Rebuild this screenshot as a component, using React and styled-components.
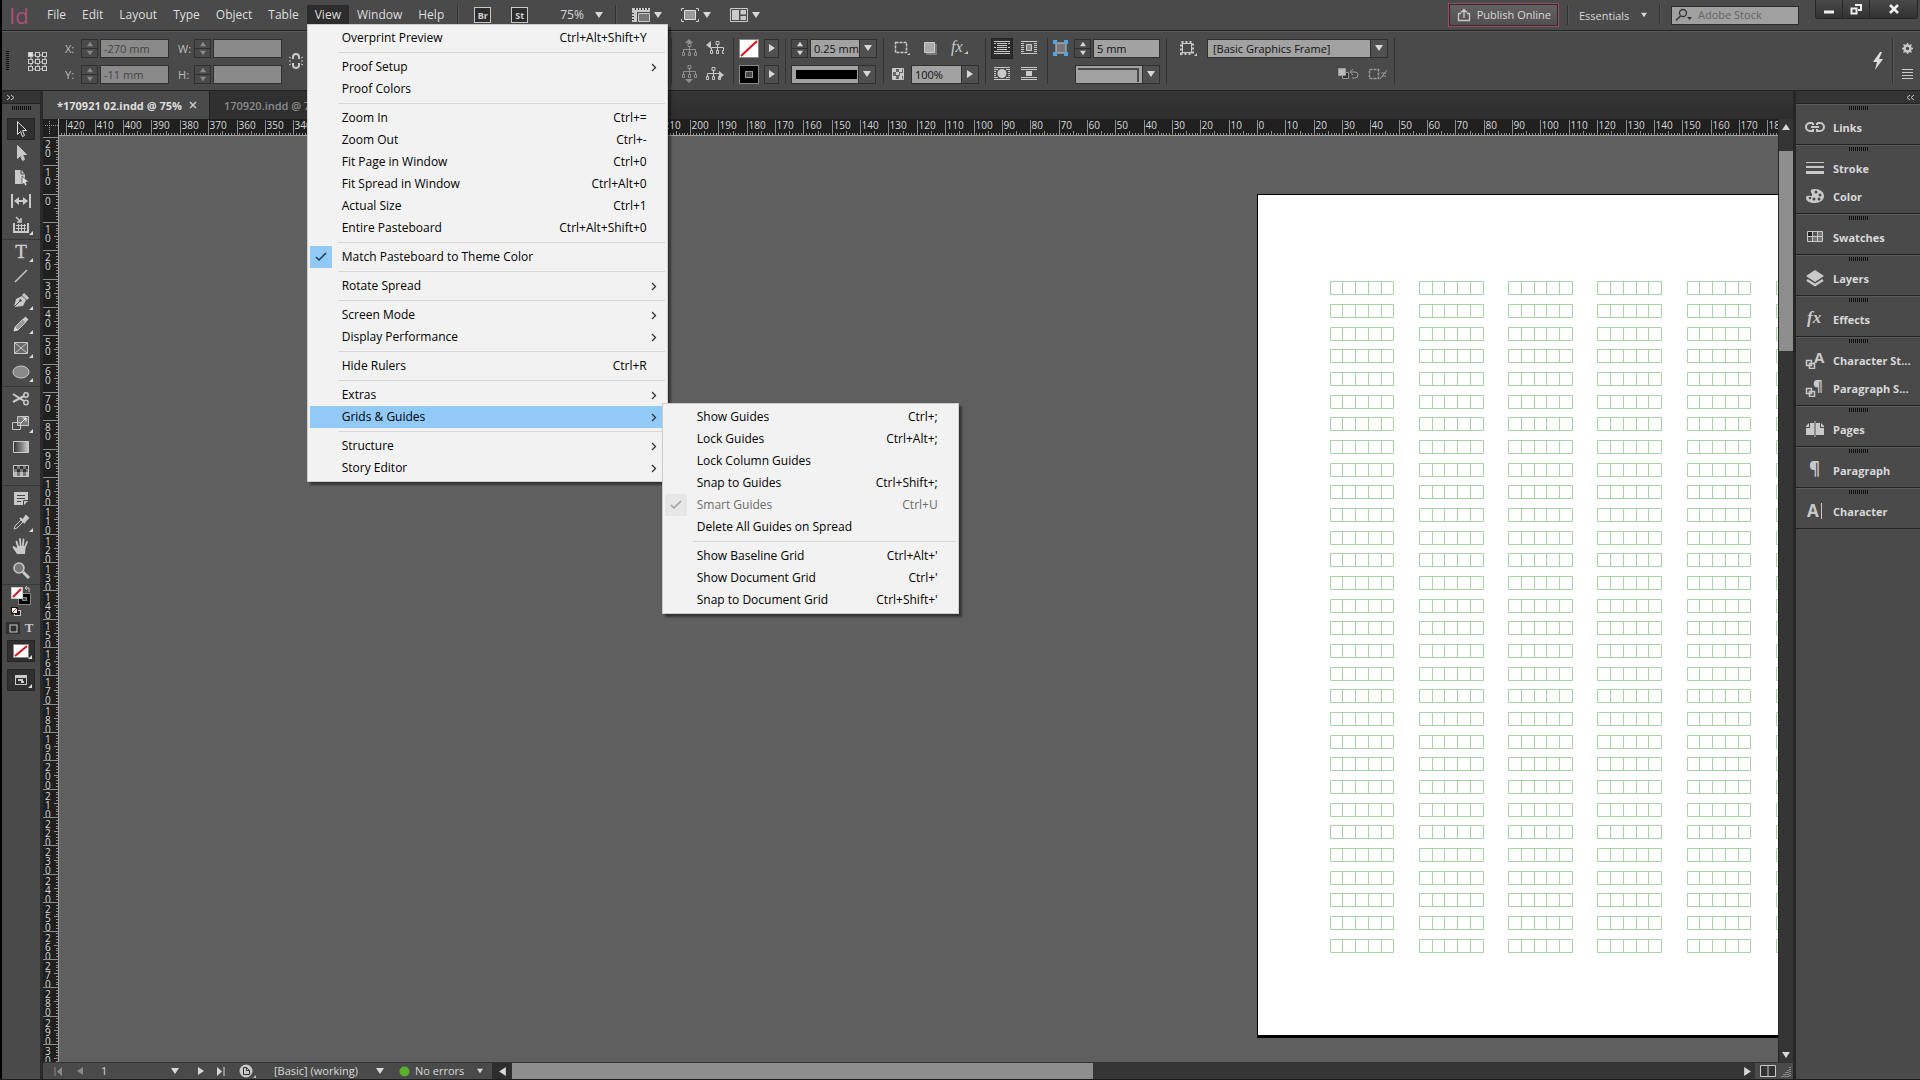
import React from 'react'
import styled, { createGlobalStyle, css } from 'styled-components'

const GlobalStyle = createGlobalStyle`
  * { box-sizing: border-box; }
  html, body, #root { height: 100%; }
  body {
    margin: 0;
    overflow: hidden;
    background: #000;
    color: #d8d8d8;
    font-family: 'Open Sans', 'Noto Sans', sans-serif;
    font-size: 11px;
  }
  button, input, select {
    font: inherit;
    color: inherit;
    margin: 0;
    padding: 0;
    border: 0;
    border-radius: 0;
    background: none;
  }
  ul { list-style: none; margin: 0; padding: 0; }
  svg { display: block; flex: none; }
`;

const Shell = styled.div`
  display: flex;
  flex-direction: column;
  height: 100vh;
  padding-left: 2px;
  border-bottom: 1px solid #1c1c1c;
`;

/* ---------- menu bar ---------- */

const MenuBar = styled.header`
  display: flex;
  align-items: center;
  height: 31px;
  flex: none;
  background: #4a4a4a;
  border-bottom: 1px solid #222;
`;

const Logo = styled.div`
  width: 37px;
  padding-left: 7px;
  color: #a8507a;
  font-size: 22px;
  line-height: 24px;
`;

const MenuNames = styled.nav`
  display: flex;
  align-items: flex-end;
  height: 24px;
  align-self: flex-start;
  margin-right: 5px;
`;

const MenuSlot = styled.div`
  position: relative;
`;

const MenuName = styled.button`
  display: block;
  height: 19px;
  padding: 0 8px;
  font-size: 12px;
  line-height: 18px;
  color: #dedede;
  ${p => p.$open && css`
    background: #2d2d2d;
    border-radius: 2px 2px 0 0;
  `}
`;

const Rule = styled.span`
  width: 1px;
  height: ${p => p.$h || 20}px;
  background: #333;
  border-right: 1px solid #555;
  box-sizing: content-box;
  flex: none;
`;

const BridgeButton = styled.button`
  width: 17px;
  height: 16px;
  border: 1px solid #c8c8c8;
  background: #2e2e2e;
  color: #d0d0d0;
  font-size: 9px;
  font-weight: 700;
  line-height: 13px;
`;

const BarTools = styled.div`
  display: flex;
  align-items: center;
  gap: 20px;
  padding: 0 16px 0 15px;
`;

const ZoomLabel = styled.label`
  display: flex;
  align-items: center;
  gap: 6px;
  padding: 0 12px 0 16px;
  select {
    appearance: none;
    width: 29px;
    font-size: 12px;
    line-height: 18px;
  }
`;

const ViewTools = styled.div`
  display: flex;
  gap: 18px;
  padding-left: 14px;
  flex: 1;
`;

const IconButton = styled.button`
  display: flex;
  align-items: center;
  justify-content: center;
  gap: 3px;
  min-width: ${p => p.$w || 20}px;
  height: ${p => p.$h || 19}px;
  flex: none;
  ${p => p.$pressed && css`
    background: #2d2d2d;
    border: 1px solid #242424;
  `}
`;

const PublishButton = styled.button`
  display: flex;
  align-items: center;
  gap: 6px;
  height: 24px;
  margin-right: 8px;
  padding: 0 7px 0 8px;
  border: 1px solid #93506a;
  box-shadow: inset 0 0 0 1px #43202d;
  background: linear-gradient(#626262, #505050);
  line-height: 16px;
`;

const Workspace = styled.label`
  display: flex;
  align-items: center;
  gap: 6px;
  padding: 0 12px 0 10px;
  select {
    appearance: none;
    width: 56px;
  }
`;

const Search = styled.label`
  display: flex;
  align-items: center;
  gap: 5px;
  width: 128px;
  height: 19px;
  margin: 0 16px 0 10px;
  padding: 0 3px;
  background: #a0a0a0;
  border: 1px solid #2a2a2a;
  input { width: 90px; color: #333; line-height: 16px; outline: 0; }
  input::placeholder { color: #666; opacity: 1; }
`;

const WindowButtons = styled.div`
  display: flex;
  align-self: flex-start;
  margin-right: 2px;
  border: 1px solid #272727;
  border-top: 0;
  border-radius: 0 0 3px 3px;
  button {
    display: flex;
    align-items: center;
    justify-content: center;
    width: 27px;
    height: 18px;
    background: linear-gradient(#4a4a4a, #323232);
    border-right: 1px solid #272727;
  }
  button:last-child { width: 47px; border-right: 0; }
`;

/* ---------- drop-down menus ---------- */

const Popup = styled.ul`
  position: absolute;
  z-index: 10;
  left: ${p => (p.$sub ? 352 : 0)}px;
  top: ${p => (p.$sub ? -3 : 19)}px;
  width: ${p => (p.$sub ? 297 : 361)}px;
  padding: 2px;
  background: #f2f2f2;
  border: 1px solid #ccc;
  box-shadow: 3px 3px 2px rgba(0,0,0,.45);
  color: #000;
`;

const Entry = styled.li`
  position: relative;
`;

const EntryButton = styled.button`
  display: flex;
  align-items: center;
  width: 100%;
  height: 22px;
  padding-right: 7px;
  font-size: 12px;
  line-height: 22px;
  text-align: left;
  background: ${p => (p.$active ? '#91c9f7' : 'none')};
  color: ${p => (p.disabled ? '#6d6d6d' : '#000')};
`;

const CheckSlot = styled.span`
  display: flex;
  align-items: center;
  justify-content: center;
  width: 22px;
  height: 22px;
  margin-right: 10px;
  flex: none;
  color: ${p => (p.$dim ? '#a0a0a0' : '#1d3c55')};
  background: ${p => (p.$on ? (p.$dim ? '#e6e6e6' : '#91c9f7') : 'none')};
`;

const EntryText = styled.span`
  flex: 1;
  white-space: nowrap;
`;

const Shortcut = styled.span`
  margin-right: 11px;
  white-space: nowrap;
`;

const Divider = styled.li`
  height: 1px;
  margin: 3px 0 3px 28px;
  background: #d7d7d7;
`;

/* ---------- control strip ---------- */

const ControlStrip = styled.section`
  display: flex;
  align-items: center;
  height: 60px;
  flex: none;
  padding-left: 4px;
  background: #4a4a4a;
  border-top: 1px solid #5a5a5a;
  border-bottom: 1px solid #222;
`;

const VGrip = styled.div`
  width: 3px;
  height: 20px;
  margin-right: 19px;
  background: repeating-linear-gradient(#111 0 1px, #4a4a4a 1px 2px);
`;

const Group = styled.div`
  display: flex;
  flex-direction: column;
  justify-content: center;
  gap: 7px;
  height: 46px;
  flex: none;
  width: ${p => p.$w}px;
  padding: 0 ${p => p.$pr || 0}px 0 ${p => p.$pl || 0}px;
  border-left: ${p => (p.$plain ? 0 : 1)}px solid #333;
`;

const Line = styled.div`
  display: flex;
  align-items: center;
  gap: ${p => p.$gap || 2}px;
  height: 19px;
  justify-content: ${p => (p.$end ? 'flex-end' : 'flex-start')};
`;

const CoordLabel = styled.label`
  display: flex;
  align-items: center;
  gap: 2px;
  color: #bdbdbd;
  > span:first-child { width: 14px; }
`;

const Steps = styled.span`
  display: flex;
  flex-direction: column;
  width: 17px;
  height: 19px;
  border: 1px solid #303030;
  flex: none;
  button {
    display: flex;
    flex: 1;
    align-items: center;
    justify-content: center;
    color: ${p => (p.$dim ? '#8a8a8a' : '#d6d6d6')};
  }
  button + button { border-top: 1px solid #303030; }
`;

const Field = styled.input`
  width: ${p => p.$w || 67}px;
  height: 19px;
  padding: 0 0 0 3px;
  line-height: 16px;
  border: 1px solid #303030;
  background: ${p => (p.disabled ? '#8a8a8a' : '#a2a2a2')};
  color: ${p => (p.disabled ? '#444' : '#111')};
`;

const Combo = styled.span`
  display: flex;
  ${Field} { border-right: 0; }
`;

const DropButton = styled.button`
  display: flex;
  align-items: center;
  justify-content: center;
  width: ${p => p.$w || 18}px;
  height: 19px;
  border: 1px solid #303030;
  background: #505050;
  flex: none;
`;

const StrokeSample = styled.button`
  width: 67px;
  height: 19px;
  padding: 4px 1px 4px 4px;
  border: 1px solid #303030;
  border-right: 0;
  background: #a2a2a2;
  span { display: block; height: 9px; background: ${p => (p.$corner ? 'none' : '#000')}; }
  ${p => p.$corner && css`
    padding: 2px 3px 1px 2px;
    span { height: 14px; border: 2px solid #4a4a4a; border-width: 2px 2px 0 0; }
  `}
`;

const FrameSelect = styled.select`
  appearance: none;
  width: 163px;
  height: 19px;
  padding: 0 5px;
  border: 1px solid #303030;
  border-right: 0;
  background: #a2a2a2;
  color: #111;
`;

// space kept free behind the open menu
const Hidden = styled.div`
  width: 367px;
  flex: none;
`;

const StripEnd = styled.div`
  display: flex;
  align-items: center;
  justify-content: flex-end;
  flex: 1;
  gap: 8px;
  padding-right: 7px;
  border-left: 1px solid #333;
  height: 46px;
`;

const StripMenu = styled.div`
  display: flex;
  flex-direction: column;
  gap: 15px;
`;

/* ---------- work area ---------- */

const Body = styled.div`
  display: grid;
  grid-template-columns: 41px minmax(0, 1fr) 127px;
  flex: 1;
  min-height: 0;
`;

const Toolbox = styled.aside`
  background: #4a4a4a;
  border-right: 3px solid #2a2a2a;
`;

const DockHead = styled.div`
  display: flex;
  align-items: center;
  justify-content: ${p => (p.$right ? 'flex-end' : 'flex-start')};
  height: 13px;
  padding: 0 4px;
  background: #343434;
  border-bottom: 1px solid #232323;
`;

const HGrip = styled.div`
  width: 19px;
  height: 4px;
  margin: 0 auto;
  background: repeating-linear-gradient(90deg, #111 0 1px, #4a4a4a 1px 2px);
`;

const ToolList = styled.div`
  display: flex;
  flex-direction: column;
  align-items: center;
  padding-bottom: 2px;
  border-bottom: 1px solid #383838;
  ${HGrip} { margin: 2px auto 7px; }
`;

const Tool = styled.button`
  display: flex;
  align-items: center;
  justify-content: center;
  position: relative;
  width: 28px;
  height: ${p => (p.$box ? 22 : 24)}px;
  margin: ${p => (p.$box ? '1px 0' : '0')};
  ${p => p.$box && css`
    background: #303030;
    border: 1px solid #262626;
  `}
  ${p => p.$more && css`
    &:after {
      content: '';
      position: absolute;
      right: 2px;
      bottom: 2px;
      border: 2px solid transparent;
      border-right-color: #ddd;
      border-bottom-color: #ddd;
    }
  `}
`;

const ToolFoot = styled.div`
  display: flex;
  flex-direction: column;
  align-items: center;
  gap: 5px;
`;

const ApplyRow = styled.div`
  display: flex;
  gap: 2px;
  button {
    display: flex;
    align-items: center;
    justify-content: center;
    width: 14px;
    height: 12px;
  }
  button:first-child { background: #303030; }
`;

const Main = styled.main`
  display: flex;
  flex-direction: column;
  min-width: 0;
  background: #4a4a4a;
`;

const Tabs = styled.div`
  display: flex;
  height: 28px;
  flex: none;
  background: linear-gradient(#363636, #2d2d2d);
`;

const Tab = styled.div`
  display: flex;
  align-items: center;
  gap: 7px;
  padding: 0 12px 0 14px;
  border-right: 1px solid #222;
  background: ${p => (p.$active ? '#4a4a4a' : '#303030')};
  color: ${p => (p.$active ? '#dedede' : '#8c8c8c')};
  white-space: nowrap;
  button { color: inherit; }
  > button:first-child { font-weight: ${p => (p.$active ? 700 : 600)}; }
`;

const DocArea = styled.div`
  display: grid;
  grid-template-columns: 16px minmax(0, 1fr) 15px;
  grid-template-rows: 17px minmax(0, 1fr);
  flex: 1;
  min-height: 0;
`;

const RulerBox = styled.div`
  overflow: hidden;
  background: #202020;
  border: 0 solid #a6a6a6;
  border-width: ${p => (p.$v ? '0 1px 0 0' : '0 0 1px 0')};
  svg { width: 100%; height: 100%; }
  text { fill: #dadada; font-size: 10px; font-family: 'Open Sans', sans-serif; }
`;

const VScroll = styled.div`
  grid-column: 3;
  grid-row: 1 / 3;
  display: flex;
  flex-direction: column;
  align-items: center;
  background: #353535;
  border-left: 1px solid #282828;
  > button:first-child { height: 32px; padding: 4px 0 20px; }
  > button:last-child { margin-top: auto; height: 15px; }
`;

const VThumb = styled.div`
  width: 14px;
  height: 200px;
  background: #8e8e8e;
`;

const Pasteboard = styled.div`
  position: relative;
  overflow: hidden;
  background: #5f5f5f;
`;

// a page sits at its own place on the free pasteboard
const Page = styled.div`
  position: absolute;
  left: 1198px;
  top: 58px;
  width: 597px;
  height: 844px;
  background: #fff;
  border: 1px solid #000;
  border-bottom-width: 3px;
`;

const StatusBar = styled.footer`
  display: flex;
  align-items: center;
  height: 17px;
  flex: none;
  border-top: 1px solid #333;
`;

const StatusTools = styled.div`
  display: grid;
  grid-template-columns: 30px 14px 84px 17px 26px 14px 28px 128px 84px 24px;
  align-items: center;
  width: 449px;
  flex: none;
`;

const StatusCell = styled.button`
  display: flex;
  align-items: center;
  gap: 5px;
  justify-content: ${p => p.$j || 'center'};
  padding-left: ${p => p.$pl || 0}px;
  line-height: 14px;
  white-space: nowrap;
  color: ${p => (p.$dim ? '#8a8a8a' : '#d8d8d8')};
`;

const PageNo = styled.input`
  width: 80px;
  padding-left: 14px;
  line-height: 14px;
`;

const HScroll = styled.div`
  display: flex;
  flex: 1;
  align-items: center;
  height: 16px;
  background: #353535;
  > button { width: 20px; height: 16px; display: flex; align-items: center; justify-content: center; background: #2e2e2e; }
  > button:last-child { width: 16px; margin-left: auto; background: none; }
`;

const HThumb = styled.div`
  width: 46%;
  height: 16px;
  background: #8e8e8e;
`;

const Corner = styled.div`
  display: flex;
  align-items: center;
  gap: 4px;
  padding: 0 2px 0 5px;
`;

const Dock = styled.aside`
  background: #4a4a4a;
  border-left: 3px solid #262626;
`;

const PanelGroup = styled.div`
  padding: 1px 0 3px;
  border-top: 1px solid #5a5a5a;
  border-bottom: 1px solid #232323;
`;

const PanelRows = styled.div`
  padding-top: 3px;
`;

const PanelButton = styled.button`
  display: flex;
  align-items: center;
  gap: 8px;
  width: 100%;
  height: 28px;
  padding-left: 9px;
  font-weight: 700;
  white-space: nowrap;
  svg { width: 20px; height: 18px; }
`;

/* ---------- drawings ---------- */

const Tri = ({ dir = 'down', s = 8 }) => {
  const d = {
    down: 'M0 1h8L4 7z',
    up: 'M0 7h8L4 1z',
    right: 'M1 0v8l6-4z',
    left: 'M7 0v8L1 4z',
  }[dir]
  return <svg width={s} height={s} viewBox="0 0 8 8"><path d={d} fill="currentColor" /></svg>
}

const Ico = ({ w = 18, h = 16, children }) => (
  <svg width={w} height={h} viewBox={`0 0 ${w} ${h}`} fill="none" stroke="#c9c9c9">{children}</svg>
)

const NoneSwatch = ({ w = 20, h = 19 }) => (
  <Ico w={w} h={h}>
    <rect x=".5" y=".5" width={w - 1} height={h - 1} fill="#fff" stroke="#888" />
    <path d={`M2 ${h - 2}L${w - 2} 2`} stroke="#d8121a" strokeWidth="2" />
  </Ico>
)

const treeShift = {
  up: 'translate(1 4)',
  down: 'translate(1 0)',
  left: 'translate(3 2)',
  right: 'translate(-1 2)',
}

const Tree = ({ dir }) => {
  const tone = dir === 'up' || dir === 'down' ? '#8e8e8e' : '#c9c9c9'
  const head = { up: 'M5 4h8L9 0z', down: 'M5 14h8l-4 4z', left: 'M5 2v8L0 6z', right: 'M13 6v8l5-4z' }[dir]
  return (
    <Ico w={18} h={18}>
      <path d={head} fill={tone} stroke="none" />
      <g transform={treeShift[dir]} stroke={tone}>
        <path d="M7 .500h3v3H7zM8.500 4v2M2.500 9V6.500h12V9M8.500 6v3M1.500 9.500h2v3h-2zM7.500 9.500h2v3h-2zM13.500 9.500h2v3h-2z" />
      </g>
    </Ico>
  )
}

const wrapArt = {
  none: <path d="M1 1.500h16M4 3.500h10M4 5.500h10M4 7.500h10M4 9.500h10M1 11.500h16M1 13.500h16M1 3.500h2M15 3.500h2M1 7.500h2M15 7.500h2" />,
  box: <><path d="M1 1.500h16M1 3.500h3M14 3.500h3M1 5.500h3M14 5.500h3M1 7.500h3M14 7.500h3M1 9.500h3M14 9.500h3M1 11.500h3M14 11.500h3M1 13.500h16" /><path d="M6.500 4.500h5v6h-5z" fill="#888" /></>,
  shape: <><path d="M1 1.500h16M1 3.500h4M13 3.500h4M1 5.500h2M15 5.500h2M1 7.500h2M15 7.500h2M1 9.500h2M15 9.500h2M1 11.500h4M13 11.500h4M1 13.500h16" /><circle cx="9" cy="7.500" r="4.500" fill="#c9c9c9" stroke="none" /></>,
  jump: <><path d="M1 1.500h16M1 3.500h16M1 11.500h16M1 13.500h16" /><path d="M6 5h6v5H6z" fill="#c9c9c9" stroke="none" /></>,
}

const Wrap = ({ kind }) => <Ico w={18} h={16}>{wrapArt[kind]}</Ico>

const FxIcon = ({ big }) => (
  <svg width="18" height="18" viewBox="0 0 18 18">
    <text x="1" y="13" fontFamily="Liberation Serif, serif" fontStyle="italic" fontSize={big ? 17 : 16} fill="#c9c9c9">fx</text>
    {!big && <path d="M14 15h4v-3z" fill="#c9c9c9" />}
  </svg>
)

const Link = () => (
  <Ico w={16} h={18}>
    <path d="M5 7V5a3 3 0 0 1 6 0v2M5 11v2a3 3 0 0 0 6 0v-2" strokeWidth="2" />
    <path d="M1 5l2 1M1 9h2M1 13l2-1M15 5l-2 1M15 9h-2M15 13l-2-1" />
  </Ico>
)

const Proxy = () => (
  <Ico w={20} h={19}>
    <path d="M3 3h14v14H3zM3 10h14M10 3v14" />
    {[1, 8, 15].map(y => [1, 8, 15].map(x => (
      <rect key={`${x}-${y}`} x={x - 0.5} y={y - 0.5} width="4" height="4" fill={x + y === 2 ? '#ddd' : '#4a4a4a'} />
    )))}
  </Ico>
)

const toolArt = {
  select: <path d="M6.500 1.500v13l3-3 2 5 2-1-2-5h4z" fill="#333" stroke="#ddd" />,
  direct: <path d="M6.500 1.500v13l3-3 2 5 2-1-2-5h4z" fill="#c9c9c9" />,
  page: <><path d="M4 2h6l4 4v10H4z" fill="#c9c9c9" stroke="none" /><path d="M10 2v4h4" stroke="#4a4a4a" /><path d="M11 8v9l2-2 1 3 2-1-1-3h3z" fill="#ddd" stroke="#4a4a4a" strokeWidth=".7" /></>,
  gap: <><path d="M1 2v14M19 2v14" strokeWidth="2" /><path d="M4 9h12" strokeWidth="2" /><path d="M3 9l5-4v8zM17 9l-5-4v8z" fill="#c9c9c9" stroke="none" /></>,
  collect: <><path d="M3 7v9h14V7" strokeWidth="2" /><path d="M5 9.500h10M5 12.500h10M7.500 8v7M10.500 8v7M13.500 8v7" /><path d="M5 1l5 5M10 2v4H6" strokeWidth="1.500" /></>,
  line: <path d="M4 15L16 3" strokeWidth="1.500" />,
  pen: <><path d="M3 16l2-8 6-3 4 4-3 6z" fill="#c9c9c9" stroke="none" /><path d="M3 16l6-6" stroke="#4a4a4a" /><circle cx="9.500" cy="9.500" r="1.200" fill="#4a4a4a" stroke="none" /><path d="M12 3l5 5" strokeWidth="3" /></>,
  pencil: <><path d="M3 16l1-4 8-8 3 3-8 8z" fill="#9a9a9a" stroke="#c9c9c9" /><path d="M3 16l1-4 3 3z" fill="#ddd" stroke="none" /><path d="M13 3l3 3" strokeWidth="4" /></>,
  frame: <><path d="M3.500 3.500h13v11h-13z" fill="#6a6a6a" /><path d="M4 4l12 10M16 4L4 14" /></>,
  oval: <ellipse cx="10" cy="9" rx="8" ry="6" fill="#8a8a8a" />,
  scissors: <><path d="M2 4l11 7M2 12l11-6" strokeWidth="2" /><circle cx="15" cy="5" r="2.200" strokeWidth="1.500" /><circle cx="15" cy="12.500" r="2.200" strokeWidth="1.500" /></>,
  scale: <><path d="M6.500 2.500h11v9h-11z" fill="#777" /><path d="M1.500 8.500h8v7h-8z" /><path d="M10 9l5-5M11.500 4H15v3.500" stroke="#fff" /></>,
  gradient: <><defs><linearGradient id="sw"><stop offset="0" stopColor="#333" /><stop offset="1" stopColor="#ccc" /></linearGradient></defs><path d="M2.500 3.500h15v11h-15z" fill="url(#sw)" /></>,
  feather: <><path d="M2.500 3.500h15v11h-15z" fill="#777" /><path d="M3 4h3v3H3zM9 4h3v3H9zM15 4h2v3h-2zM6 7h3v3H6zM12 7h3v3h-3z" fill="#333" stroke="none" /><path d="M3 10h3v4H3zM9 10h3v4H9zM15 10h2v4h-2z" fill="#bbb" stroke="none" /></>,
  note: <><path d="M3 3h14v9l-4 4H3z" fill="#c9c9c9" stroke="none" /><path d="M6 6.500h8M6 9.500h8M6 12.500h4M12.500 16v-4.500H17" stroke="#444" /></>,
  dropper: <><path d="M3 16l1-3 6-6 2 2-6 6z" /><path d="M9 5l5 5" strokeWidth="2" /><path d="M12 7l3-4 2 2-3 3z" fill="#c9c9c9" strokeWidth="2" /></>,
  hand: <><path d="M6 17l-4-6 1-1.500L6.500 11V9h7l1 1.500L14 17z" fill="#c9c9c9" stroke="none" /><path d="M2.500 10L6 14M7 10L5.500 4.500M9.500 9l-.5-7M11.800 9l.7-6.500M13.500 11l2.500-6" strokeWidth="1.800" strokeLinecap="round" /></>,
  zoom: <><circle cx="8" cy="7" r="5" fill="#777" strokeWidth="1.500" /><path d="M12 11l6 6" strokeWidth="3" /></>,
}

const ToolIcon = ({ name }) => {
  if (name === 'type') {
    return <svg width="20" height="18" viewBox="0 0 20 18"><text x="10" y="15" textAnchor="middle" fontFamily="Liberation Serif, serif" fontSize="19" fill="#cfcfcf" stroke="#cfcfcf" strokeWidth=".4">T</text></svg>
  }
  return <Ico w={20} h={18}>{toolArt[name]}</Ico>
}

const panelArt = {
  Links: <path d="M8 5H5a3.500 3.500 0 0 0 0 8h3V11M8 5v2M12 5h3a3.500 3.500 0 0 1 0 8h-3V11M12 5v2M6 9h8" strokeWidth="2" />,
  Stroke: <><path d="M1 3.500h18" /><path d="M1 8h18" strokeWidth="2" /><path d="M1 13.500h18" strokeWidth="3" /></>,
  Color: <><path d="M10 2c5 0 9 3 9 7s-4 7-9 7-9-2-9-5 3-2 5-2 1-2 0-4 1-3 4-3z" fill="#c9c9c9" stroke="none" /><g fill="#4a4a4a" stroke="none"><circle cx="11" cy="5" r="1.500" /><circle cx="15" cy="8" r="1.500" /><circle cx="14" cy="12" r="1.500" /><circle cx="9" cy="12" r="1.500" /><circle cx="5" cy="11" r="1.300" /></g></>,
  Swatches: <><path d="M2.500 3.500h15v10h-15z" fill="#777" /><path d="M3 4h4v4H3z" fill="#222" stroke="none" /><path d="M8 4h4v4H8zM3 9h4v4H3z" fill="#555" stroke="none" /><path d="M7.500 3v11M12.500 3v11M2 8.500h16" /></>,
  Layers: <><path d="M10 1l9 6-9 6-9-6z" fill="#c9c9c9" stroke="none" /><path d="M2 11l8 5 8-5" strokeWidth="2.500" /></>,
  Pages: <><path d="M1 6l3-3v4H1zM5 3h4v12H1V8h4zM19 6l-3-3v4h3zM15 3h-4v12h8V8h-4z" fill="#c9c9c9" stroke="none" /><path d="M10 1v16" /></>,
}

const styleBoxes = <path d="M4.500 12.500h5v5h-5zM1.500 9.500h5v5h-5z" strokeWidth="1.500" fill="#4a4a4a" />

const PanelIcon = ({ name }) => {
  const glyph = (t, x, y, size) => <text x={x} y={y} fontSize={size} fontFamily="Open Sans, sans-serif" fill="#c9c9c9" stroke="none">{t}</text>
  if (name === 'Effects') return <FxIcon big />
  if (name === 'Character St...') return <Ico w={20} h={18}>{glyph('A', 9, 12, 15)}{styleBoxes}</Ico>
  if (name === 'Paragraph S...') return <Ico w={20} h={18}>{glyph('¶', 8, 12, 15)}{styleBoxes}</Ico>
  if (name === 'Paragraph') return <Ico w={20} h={18}>{glyph('¶', 4, 14, 17)}</Ico>
  if (name === 'Character') return <Ico w={20} h={18}>{glyph('A', 2, 15, 17)}<path d="M16.500 1v16" /></Ico>
  return <Ico w={20} h={18}>{panelArt[name]}</Ico>
}

// 75% zoom: pixels per millimetre
const MM = 2.83465

const HRuler = () => {
  const zero = 1198.5
  const out = []
  for (let mm = -422; mm <= 220; mm++) {
    const x = Math.floor(zero + mm * MM) + 0.5
    if (mm % 10 === 0) {
      out.push(<path key={mm} d={`M${x} 1V16`} />)
      out.push(<text key={`t${mm}`} x={x + 1} y="10" stroke="none">{Math.abs(mm)}</text>)
    } else {
      out.push(<path key={mm} d={`M${x} ${mm % 5 === 0 ? 12 : 14}V16`} />)
    }
  }
  return <svg stroke="#8f8f8f">{out}</svg>
}

const VRuler = () => {
  const zero = 58
  const out = []
  for (let mm = -20; mm <= 310; mm++) {
    const y = Math.floor(zero + mm * MM) + 0.5
    if (mm % 10 === 0) {
      out.push(<path key={mm} d={`M0 ${y}H15`} />)
      String(Math.abs(mm)).split('').forEach((c, i) => {
        out.push(<text key={`${mm}-${i}`} x="2" y={y + 10 + i * 9} stroke="none">{c}</text>)
      })
    } else {
      out.push(<path key={mm} d={`M${mm % 5 === 0 ? 11 : 13} ${y}H15`} />)
    }
  }
  return <svg stroke="#8f8f8f">{out}</svg>
}

const BoxGrid = () => {
  const cell = 4.5 * MM
  const out = []
  for (let row = 0; row < 30; row++) {
    const y = Math.floor(86.65 + row * 8 * MM) + 0.5
    for (let col = 0; col < 6; col++) {
      const x0 = 72.05 + col * 7 * cell
      const xs = [0, 1, 2, 3, 4, 5].map(i => Math.floor(x0 + i * cell) + 0.5)
      out.push(
        <path
          key={`${row}-${col}`}
          d={`M${xs[0]} ${y}H${xs[5]}V${y + 13}H${xs[0]}z` + xs.slice(1, 5).map(x => `M${x} ${y}v13`).join('')}
        />
      )
    }
  }
  return <svg width="595" height="840" fill="none" stroke="#a6d3a6">{out}</svg>
}

/* ---------- data ---------- */

const gridsMenu = [
  { text: 'Show Guides', keys: 'Ctrl+;' },
  { text: 'Lock Guides', keys: 'Ctrl+Alt+;' },
  { text: 'Lock Column Guides' },
  { text: 'Snap to Guides', keys: 'Ctrl+Shift+;' },
  { text: 'Smart Guides', keys: 'Ctrl+U', checked: true, disabled: true },
  { text: 'Delete All Guides on Spread' },
  null,
  { text: 'Show Baseline Grid', keys: "Ctrl+Alt+'" },
  { text: 'Show Document Grid', keys: "Ctrl+'" },
  { text: 'Snap to Document Grid', keys: "Ctrl+Shift+'" },
]

const viewMenu = [
  { text: 'Overprint Preview', keys: 'Ctrl+Alt+Shift+Y' },
  null,
  { text: 'Proof Setup', more: true },
  { text: 'Proof Colors' },
  null,
  { text: 'Zoom In', keys: 'Ctrl+=' },
  { text: 'Zoom Out', keys: 'Ctrl+-' },
  { text: 'Fit Page in Window', keys: 'Ctrl+0' },
  { text: 'Fit Spread in Window', keys: 'Ctrl+Alt+0' },
  { text: 'Actual Size', keys: 'Ctrl+1' },
  { text: 'Entire Pasteboard', keys: 'Ctrl+Alt+Shift+0' },
  null,
  { text: 'Match Pasteboard to Theme Color', checked: true },
  null,
  { text: 'Rotate Spread', more: true },
  null,
  { text: 'Screen Mode', more: true },
  { text: 'Display Performance', more: true },
  null,
  { text: 'Hide Rulers', keys: 'Ctrl+R' },
  null,
  { text: 'Extras', more: true },
  { text: 'Grids & Guides', more: true, items: gridsMenu },
  null,
  { text: 'Structure', more: true },
  { text: 'Story Editor', more: true },
]

const toolGroups = [
  ['select', 'direct', 'page', 'gap', 'collect+'],
  ['type+', 'line', 'pen+', 'pencil+', 'frame+', 'oval+'],
  ['scissors', 'scale+', 'gradient', 'feather'],
  ['note', 'dropper+', 'hand', 'zoom'],
]

const panels = [
  ['Links'],
  ['Stroke', 'Color'],
  ['Swatches'],
  ['Layers'],
  ['Effects'],
  ['Character St...', 'Paragraph S...'],
  ['Pages'],
  ['Paragraph'],
  ['Character'],
]

/* ---------- parts ---------- */

const Menu = ({ items, sub }) => (
  <Popup $sub={sub} role="menu">
    {items.map((it, i) => it === null ? <Divider key={i} role="separator" /> : (
      <Entry key={i} role="none">
        <EntryButton role="menuitem" $active={!!it.items} disabled={it.disabled}>
          <CheckSlot $on={it.checked} $dim={it.disabled}>
            {it.checked && <svg width="12" height="10" viewBox="0 0 12 10"><path d="M1 5l3 3 7-7" fill="none" stroke="currentColor" strokeWidth="1.500" /></svg>}
          </CheckSlot>
          <EntryText>{it.text}</EntryText>
          {it.keys && <Shortcut>{it.keys}</Shortcut>}
          {it.more && <svg width="8" height="9" viewBox="0 0 8 9"><path d="M2 1l3.500 3.500L2 8" fill="none" stroke="#333" strokeWidth="1.300" /></svg>}
        </EntryButton>
        {it.items && <Menu items={it.items} sub />}
      </Entry>
    ))}
  </Popup>
)

const Stepper = ({ dim }) => (
  <Steps $dim={dim}>
    <button aria-label="Increase"><Tri dir="up" s={6} /></button>
    <button aria-label="Decrease"><Tri s={6} /></button>
  </Steps>
)

const Coord = ({ name, value = '' }) => (
  <CoordLabel>
    <span>{name}:</span>
    <Stepper dim />
    <Field $w={69} disabled defaultValue={value} aria-label={name} />
  </CoordLabel>
)

const TopBar = () => (
  <MenuBar>
    <Logo>Id</Logo>
    <MenuNames>
      {['File', 'Edit', 'Layout', 'Type', 'Object', 'Table', 'View', 'Window', 'Help'].map(n => (
        <MenuSlot key={n}>
          <MenuName $open={n === 'View'}>{n}</MenuName>
          {n === 'View' && <Menu items={viewMenu} />}
        </MenuSlot>
      ))}
    </MenuNames>
    <Rule />
    <BarTools>
      <BridgeButton>Br</BridgeButton>
      <BridgeButton>St</BridgeButton>
    </BarTools>
    <ZoomLabel>
      <select aria-label="Zoom level" defaultValue="75%"><option>75%</option></select>
      <Tri />
    </ZoomLabel>
    <Rule />
    <ViewTools>
      <IconButton aria-label="View options">
        <Ico w={20} h={16}><path d="M1 1h18v4H6v10H1z" fill="#c9c9c9" stroke="none" /><path d="M4.500 1v2M7.500 1v2M10.500 1v2M13.500 1v2M16.500 1v2M1 6.500h2M1 9.500h2M1 12.500h2" stroke="#333" /><path d="M7.500 6.500h11v8h-11z" fill="#777" /></Ico>
        <Tri />
      </IconButton>
      <IconButton aria-label="Screen mode">
        <Ico w={20} h={16}><path d="M1.500 4V1.500H4M16 1.500h2.500V4M1.500 12v2.500H4M16 14.500h2.500V12" /><path d="M4.500 3.500h11v9h-11z" fill="#999" stroke="#ddd" /></Ico>
        <Tri />
      </IconButton>
      <IconButton aria-label="Arrange documents">
        <Ico w={20} h={16}><path d="M1.500 1.500h17v13h-17z" /><path d="M3 3h7v10H3zM11.500 3H17v4.500h-5.500zM11.500 9H17v4h-5.500z" fill="#c9c9c9" stroke="none" /></Ico>
        <Tri />
      </IconButton>
    </ViewTools>
    <PublishButton>
      <Ico w={14} h={14}><path d="M4 5.500H1.500v7h11v-7H10M7 10V2M4 4.500L7 1.500l3 3" strokeWidth="1.300" /></Ico>
      Publish Online
    </PublishButton>
    <Rule />
    <Workspace>
      <select aria-label="Workspace" defaultValue="Essentials"><option>Essentials</option></select>
      <Tri s={6} />
    </Workspace>
    <Rule />
    <Search>
      <Ico w={18} h={14}><circle cx="8" cy="5" r="3.500" stroke="#333" strokeWidth="1.300" /><path d="M5.500 8L1 12.500" stroke="#333" strokeWidth="1.500" /><path d="M12 9h5l-2.500 3z" fill="#333" stroke="none" /></Ico>
      <input aria-label="Search" placeholder="Adobe Stock" />
    </Search>
    <WindowButtons>
      <button aria-label="Minimize"><Ico w={12} h={12}><path d="M1 9h10" stroke="#eee" strokeWidth="3" /></Ico></button>
      <button aria-label="Restore"><Ico w={12} h={12}><path d="M5 2h6v5H8M1.500 5.500h5v5h-5z" stroke="#eee" strokeWidth="2" /></Ico></button>
      <button aria-label="Close"><Ico w={12} h={12}><path d="M2 2l8 8M10 2l-8 8" stroke="#eee" strokeWidth="2.500" /></Ico></button>
    </WindowButtons>
  </MenuBar>
)

const Controls = () => (
  <ControlStrip>
    <VGrip />
    <Proxy />
    <Group $plain $w={130} $pl={17}>
      <Line><Coord name="X" value="-270 mm" /></Line>
      <Line><Coord name="Y" value="-11 mm" /></Line>
    </Group>
    <Group $plain $w={110}>
      <Line><Coord name="W" /></Line>
      <Line><Coord name="H" /></Line>
    </Group>
    <Link />
    <Hidden />
    <Group $w={62} $pl={8}>
      <Line $gap={8}><Tree dir="up" /><Tree dir="left" /></Line>
      <Line $gap={8}><Tree dir="down" /><Tree dir="right" /></Line>
    </Group>
    <Group $w={52} $pl={5}>
      <Line $gap={5}><NoneSwatch /><DropButton $w={15} aria-label="Fill"><Tri dir="right" /></DropButton></Line>
      <Line $gap={5}>
        <Ico w={20} h={19}><rect x=".5" y=".5" width="19" height="18" fill="#000" stroke="#888" /><rect x="6.500" y="6.500" width="7" height="6" fill="#4a4a4a" stroke="#999" /></Ico>
        <DropButton $w={15} aria-label="Stroke"><Tri dir="right" /></DropButton>
      </Line>
    </Group>
    <Group $w={98} $pl={5}>
      <Line>
        <Stepper />
        <Combo><Field $w={49} aria-label="Stroke weight" defaultValue="0.25 mm" /><DropButton aria-label="Weights"><Tri /></DropButton></Combo>
      </Line>
      <Line>
        <Combo><StrokeSample aria-label="Stroke type"><span /></StrokeSample><DropButton aria-label="Types"><Tri /></DropButton></Combo>
      </Line>
    </Group>
    <Group $w={102} $pl={7}>
      <Line $gap={9}>
        <IconButton aria-label="Corner"><Ico w={18} h={16}><path d="M3.500 2.500h11v10h-11z" strokeDasharray="3 1" strokeWidth="1.500" /><path d="M15 15h3v-2z" fill="#c9c9c9" stroke="none" /></Ico></IconButton>
        <IconButton aria-label="Drop shadow"><Ico w={18} h={16}><path d="M5 4h11v11H5z" fill="#777" stroke="none" /><path d="M3.500 2.500h10v10h-10z" fill="#aaa" /></Ico></IconButton>
        <IconButton aria-label="Effects"><FxIcon /></IconButton>
      </Line>
      <Line $gap={6}>
        <Ico w={14} h={14}><path d="M1.500 1.500h11v11h-11z" fill="#666" /><path d="M2 2h3v3H2zM8 2h3v3H8zM5 5h3v3H5zM9 6h3v3H9zM2 9h3v3H2zM8 9h3v3H8z" fill="#c9c9c9" stroke="none" /></Ico>
        <Combo><Field $w={50} aria-label="Opacity" defaultValue="100%" /><DropButton aria-label="Opacity slider"><Tri dir="right" /></DropButton></Combo>
      </Line>
    </Group>
    <Group $w={62} $pl={5}>
      <Line $gap={5}>
        <IconButton $w={22} $h={21} $pressed aria-label="No text wrap"><Wrap kind="none" /></IconButton>
        <IconButton $w={22} aria-label="Wrap bounding box"><Wrap kind="box" /></IconButton>
      </Line>
      <Line $gap={5}>
        <IconButton $w={22} aria-label="Wrap shape"><Wrap kind="shape" /></IconButton>
        <IconButton $w={22} aria-label="Jump object"><Wrap kind="jump" /></IconButton>
      </Line>
    </Group>
    <Group $w={119} $pr={6}>
      <Line $end>
        <Ico w={20} h={18}><path d="M4 4h10v10H4z" fill="#777" /><path d="M1 1h4v4H1zM12 1h4v4h-4zM1 13h4v4H1zM12 13h4v4h-4z" fill="#49a7ea" stroke="none" /></Ico>
        <Stepper />
        <Field aria-label="Corner size" defaultValue="5 mm" />
      </Line>
      <Line $end>
        <Combo><StrokeSample $corner aria-label="Corner shape"><span /></StrokeSample><DropButton aria-label="Shapes"><Tri /></DropButton></Combo>
      </Line>
    </Group>
    <Group $w={228} $pr={6}>
      <Line $end $gap={10}>
        <Ico w={18} h={16}><path d="M3.500 3.500h9v9h-9z" strokeWidth="1" /><path d="M2.500 2.500h11v11h-11z" strokeDasharray="2 2" strokeWidth="3" /><path d="M15 16h3v-3z" fill="#c9c9c9" stroke="none" /></Ico>
        <Combo>
          <FrameSelect aria-label="Object style" defaultValue="b"><option value="b">[Basic Graphics Frame]</option></FrameSelect>
          <DropButton aria-label="Object styles"><Tri /></DropButton>
        </Combo>
      </Line>
      <Line $end $gap={9}>
        <Ico w={22} h={14}><g stroke="#999"><path d="M5.500 5.500h6v6h-6z" fill="#333" /><path d="M1.500 1.500h7v7h-7z" fill="#bbb" /><path d="M13 5h5a2.500 2.500 0 0 1 0 6h-3M16 2l-3 3 3 3" /></g></Ico>
        <Ico w={20} h={14}><g stroke="#999"><path d="M1.500 2.500h9v9h-9z" strokeDasharray="3 1" strokeWidth="1.500" /><path d="M12 12l7-9M13 6h5M14 9h4" /></g></Ico>
      </Line>
    </Group>
    <StripEnd>
      <Ico w={12} h={20}><path d="M8 1L1 11h4l-2 8 8-11H7l3-7z" fill="#ddd" stroke="none" /></Ico>
      <Rule $h={46} />
      <StripMenu>
        <Ico w={11} h={11}><circle cx="5.500" cy="5.500" r="3" strokeWidth="2.500" /><path d="M5.500 0v2M5.500 9v2M0 5.500h2M9 5.500h2M1.500 1.500l1.500 1.500M8 8l1.500 1.500M9.500 1.500L8 3M3 8L1.500 9.500" strokeWidth="1.500" /></Ico>
        <Ico w={11} h={10}><path d="M0 .500h11M0 3.500h11M0 6.500h11M0 9.500h11" /></Ico>
      </StripMenu>
    </StripEnd>
  </ControlStrip>
)

const Tools = () => (
  <Toolbox>
    <DockHead><Ico w={10} h={7}><path d="M1 1l3 2.500L1 6M5 1l3 2.500L5 6" /></Ico></DockHead>
    {toolGroups.map((g, i) => (
      <ToolList key={i}>
        {i === 0 && <HGrip />}
        {g.map(t => {
          const name = t.replace('+', '')
          return <Tool key={t} aria-label={name} $more={t !== name} $box={t === 'select'}><ToolIcon name={name} /></Tool>
        })}
      </ToolList>
    ))}
    <ToolFoot>
      <Ico w={24} h={32}>
        <rect x="11.500" y="10.500" width="8" height="7" stroke="#000" strokeWidth="4" />
        <rect x="9.500" y="8.500" width="12" height="11" stroke="#888" />
        <rect x="13.500" y="12.500" width="4" height="3" fill="#4a4a4a" stroke="#888" />
        <rect x="2.500" y="2.500" width="11" height="11" fill="#fff" />
        <path d="M4 12l8-8" stroke="#d8121a" strokeWidth="2" />
        <path d="M16 3h4v4M18 1l-2 2 2 2" />
        <rect x="5.500" y="25.500" width="6" height="5" fill="#222" />
        <rect x="2.500" y="22.500" width="6" height="6" fill="#fff" stroke="#111" />
        <path d="M3 28l5-5" stroke="#d8121a" />
      </Ico>
      <ApplyRow>
        <button aria-label="Apply to container"><Ico w={9} h={9}><rect x="1" y="1" width="7" height="7" /></Ico></button>
        <button aria-label="Apply to text"><svg width="12" height="12"><text x="6" y="10" textAnchor="middle" fontFamily="Liberation Serif, serif" fontWeight="700" fontSize="13" fill="#c9c9c9">T</text></svg></button>
      </ApplyRow>
      <Tool $box $more aria-label="Apply none"><NoneSwatch w={16} h={14} /></Tool>
      <Tool $box $more aria-label="Preview mode"><Ico w={12} h={12}><rect x=".5" y="1.500" width="11" height="9" /><path d="M0 3h12" strokeWidth="2" /><path d="M3 6h4v3M6 8h3" strokeWidth="2" /></Ico></Tool>
    </ToolFoot>
  </Toolbox>
)

const Status = () => (
  <StatusBar>
    <StatusTools>
      <StatusCell $dim aria-label="First page"><svg width="8" height="9"><path d="M1 0v9" stroke="#8a8a8a" /><path d="M8 0v9L3 4.500z" fill="#8a8a8a" /></svg></StatusCell>
      <StatusCell $dim aria-label="Previous page"><Tri dir="left" /></StatusCell>
      <PageNo aria-label="Page" defaultValue="1" />
      <StatusCell $j="flex-start" aria-label="Page list"><Tri /></StatusCell>
      <StatusCell aria-label="Next page"><Tri dir="right" /></StatusCell>
      <StatusCell aria-label="Last page"><svg width="8" height="9"><path d="M7 0v9" stroke="#d8d8d8" /><path d="M0 0v9l5-4.500z" fill="#d8d8d8" /></svg></StatusCell>
      <StatusCell $j="flex-end" aria-label="Open"><Ico w={17} h={14}><circle cx="7" cy="7" r="6.500" fill="#c9c9c9" stroke="none" /><path d="M4.500 3.500h3l3 3v4h-6zM7.500 3.500v3h3" stroke="#333" /><path d="M14 14h3v-3z" fill="#c9c9c9" stroke="none" /></Ico></StatusCell>
      <StatusCell $j="space-between" $pl={18}>[Basic] (working)<Tri /></StatusCell>
      <StatusCell $j="flex-start" $pl={15}><svg width="11" height="11"><circle cx="5.500" cy="5.500" r="5" fill="#5cae2e" /></svg>No errors</StatusCell>
      <StatusCell aria-label="Preflight menu"><Tri s={6} /></StatusCell>
    </StatusTools>
    <HScroll>
      <button aria-label="Scroll left"><Tri dir="left" s={9} /></button>
      <HThumb />
      <button aria-label="Scroll right"><Tri dir="right" s={9} /></button>
    </HScroll>
    <Corner>
      <Ico w={16} h={12}><path d="M.5.500h15v11H.5zM8 0v12" fill="#333" /></Ico>
      <Ico w={11} h={11}><path d="M10 1v10M8 4v7M6 6v5M4 8v3M2 10v1" strokeDasharray="1 1" /></Ico>
    </Corner>
  </StatusBar>
)

const App = () => {
  return (
    <>
      <GlobalStyle />
      <Shell>
        <TopBar />
        <Controls />
        <Body>
          <Tools />
          <Main>
            <Tabs>
              <Tab $active><button>*170921 02.indd @ 75%</button><button aria-label="Close tab"><Ico w={8} h={8}><path d="M1 1l6 6M7 1L1 7" strokeWidth="1.500" /></Ico></button></Tab>
              <Tab><button>170920.indd @ 75%</button></Tab>
            </Tabs>
            <DocArea>
              <RulerBox $v><svg stroke="#9a9a9a" strokeDasharray="1 1"><path d="M6.500 2v14M2 6.500h14" /></svg></RulerBox>
              <RulerBox><HRuler /></RulerBox>
              <RulerBox $v><VRuler /></RulerBox>
              <Pasteboard><Page><BoxGrid /></Page></Pasteboard>
              <VScroll>
                <button aria-label="Scroll up"><Tri dir="up" /></button>
                <VThumb />
                <button aria-label="Scroll down"><Tri /></button>
              </VScroll>
            </DocArea>
            <Status />
          </Main>
          <Dock>
            <DockHead $right><Ico w={10} h={7}><path d="M4 1L1 3.500 4 6M8 1L5 3.500 8 6" /></Ico></DockHead>
            {panels.map(rows => (
              <PanelGroup key={rows[0]}>
                <HGrip />
                <PanelRows>
                  {rows.map(r => <PanelButton key={r}><PanelIcon name={r} />{r}</PanelButton>)}
                </PanelRows>
              </PanelGroup>
            ))}
          </Dock>
        </Body>
      </Shell>
    </>
  )
}

export default App
